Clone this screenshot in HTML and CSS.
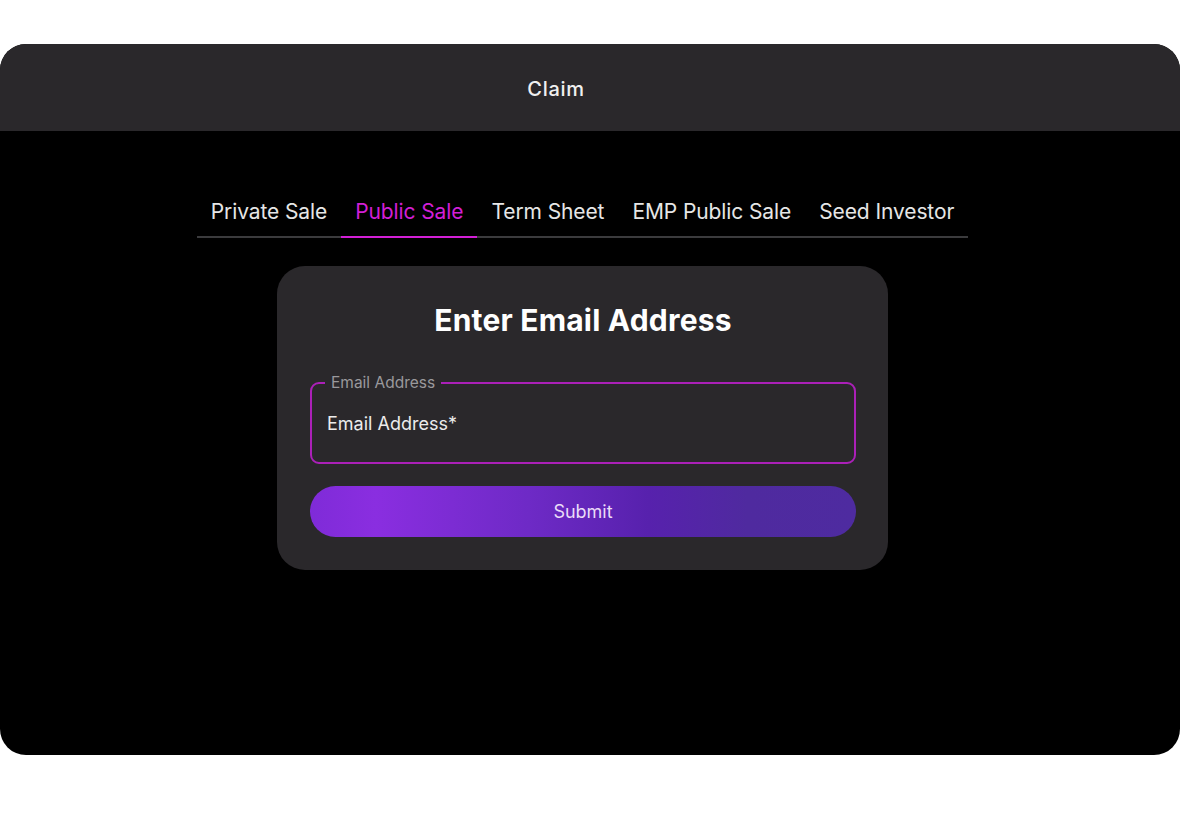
FILE: index.html
```html
<!DOCTYPE html>
<html lang="en">
<head>
    <meta charset="UTF-8">
    <meta name="viewport" content="width=device-width, initial-scale=1.0">
    <title>Claim</title>
    <link rel="stylesheet" href="styles.css">
</head>
<body>

    <div class="frame">
        <header class="top-bar">
            <h1>Claim</h1>
        </header>

        <main class="content">
            <nav class="tabs">
                <a href="#" class="tab">Private Sale</a>
                <a href="#" class="tab active">Public Sale</a>
                <a href="#" class="tab">Term Sheet</a>
                <a href="#" class="tab">EMP Public Sale</a>
                <a href="#" class="tab">Seed Investor</a>
            </nav>

            <!-- Formulario de email -->
            <form class="claim-card" onsubmit="return false;">
                <h2>Enter Email Address</h2>
                <fieldset class="email-field">
                    <legend>Email Address</legend>
                    <input type="email" placeholder="Email Address*">
                </fieldset>
                <button type="submit" class="submit-button">Submit</button>
            </form>
        </main>
    </div>

</body>
</html>
```

FILE: styles.css
```css
* {
    margin: 0;
    padding: 0;
    box-sizing: border-box;
}

body {
    background-color: #ffffff;
    font-family: Inter, 'Noto Sans', sans-serif;
    color: #ededed;
}

.frame {
    margin-top: 44px;
    width: 1180px;
    height: 711px;
    background-color: #000000;
    border-radius: 26px;
    overflow: hidden;
}

/* Barra superior */
.top-bar {
    height: 87px;
    background-color: #2a282b;
    display: flex;
    align-items: center;
    justify-content: center;
    padding-right: 68px;
}

.top-bar h1 {
    font-size: 20px;
    font-weight: 500;
    color: #f0f0f0;
    letter-spacing: 0.7px;
    margin-top: 2px;
}

.content {
    display: flex;
    flex-direction: column;
    align-items: center;
    padding-top: 54px;
    padding-right: 15px;
}

/* Pestañas */
.tabs {
    display: flex;
    border-bottom: 2px solid #3b3b3d;
}

.tab {
    font-size: 21px;
    line-height: 26px;
    padding: 14px 14px 11px;
    color: #e6e6e6;
    text-decoration: none;
    letter-spacing: -0.1px;
    white-space: nowrap;
}

.tab.active {
    color: #d21fd6;
    border-bottom: 2px solid #d21fd6;
    margin-bottom: -2px;
}

/* Tarjeta */
.claim-card {
    margin-top: 28px;
    width: 611px;
    background-color: #2a282b;
    border-radius: 28px;
    padding: 33px 32px 33px 33px;
    display: flex;
    flex-direction: column;
}

.claim-card h2 {
    text-align: center;
    font-size: 30px;
    font-weight: 700;
    color: #ffffff;
    letter-spacing: 0.2px;
    line-height: 40px;
    margin-top: 1px;
    margin-bottom: 42px;
}

.email-field {
    border: 2px solid #ab20b8;
    border-radius: 9px;
    height: 91px;
    padding: 0 15px;
    margin-top: -9px;
}

.email-field legend {
    font-size: 15.5px;
    color: #9a999c;
    padding: 0 6px;
    margin-left: -2px;
    letter-spacing: 0;
}

.email-field input {
    width: 100%;
    background: none;
    border: none;
    outline: none;
    font-family: inherit;
    font-size: 18px;
    color: #ececec;
    margin-top: 21px;
    letter-spacing: 0;
}

.email-field input::placeholder {
    color: #ececec;
    opacity: 1;
}

.submit-button {
    margin-top: 22px;
    height: 51px;
    border: none;
    border-radius: 26px;
    background: linear-gradient(90deg, #7f2bd8 0%, #8a2ee0 12%, #6e2ac6 40%, #5721ad 62%, #4f2a9f 80%, #4e2ba0 100%);
    color: #eadcf7;
    font-family: inherit;
    font-size: 18px;
    letter-spacing: 0;
    cursor: pointer;
}
```
